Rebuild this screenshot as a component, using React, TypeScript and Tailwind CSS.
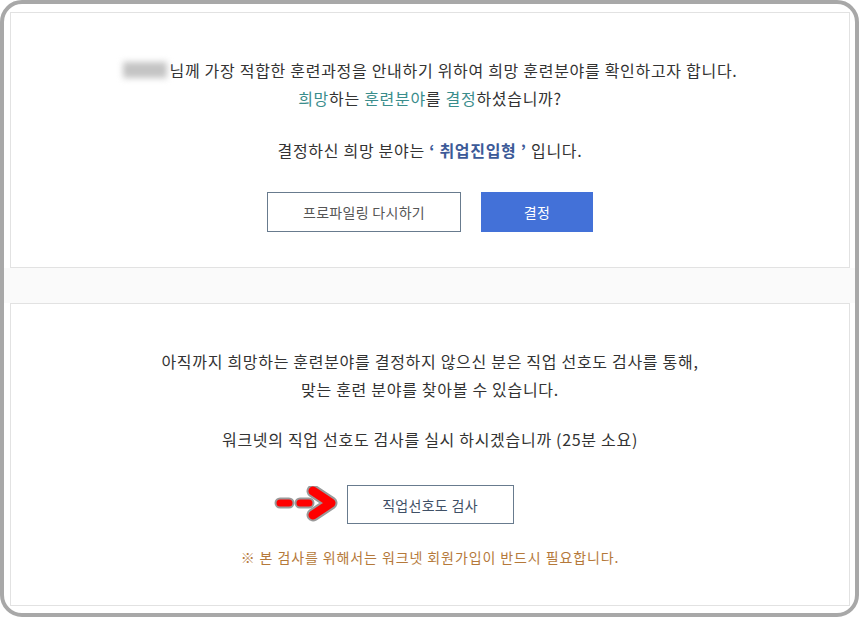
const font = { fontFamily: '"Noto Sans CJK KR", "Noto Sans", sans-serif' }

const Arrow = () => (
  <svg className="absolute left-[-75px] top-[1px]" width="68" height="36" viewBox="0 0 68 36">
    <g stroke="#9a9a9a" strokeLinecap="round" strokeLinejoin="round" fill="none">
      <line x1="8" y1="17" x2="17" y2="17" strokeWidth="11" />
      <line x1="28" y1="17" x2="37" y2="17" strokeWidth="11" />
      <polyline points="41,5 59,17 41,29" strokeWidth="13" />
    </g>
    <g stroke="#ff0000" strokeLinecap="round" strokeLinejoin="round" fill="none">
      <line x1="8" y1="17" x2="17" y2="17" strokeWidth="7" />
      <line x1="28" y1="17" x2="37" y2="17" strokeWidth="7" />
      <polyline points="41,5 59,17 41,29" strokeWidth="9" />
    </g>
  </svg>
)

export default function App() {
  return (
    <div
      className="w-[859px] h-[617px] border-4 border-[#a8a8a8] rounded-[22px] bg-white overflow-hidden flex flex-col pt-2 pl-[6px] pr-[5px] text-[#333]"
      style={font}
    >
      <div className="h-[256px] border border-[#e2e2e2] bg-white flex flex-col items-center pt-[43px] text-[16px] tracking-[0.7px] leading-[28px] shrink-0">
        <p className="flex items-center">
          <span className="inline-block w-[44px] h-[16px] mr-[3px] bg-[#c4c4c4] blur-[3px]" />
          님께 가장 적합한 훈련과정을 안내하기 위하여 희망 훈련분야를 확인하고자 합니다.
        </p>
        <p>
          <span className="text-[#3a8d8c]">희망</span>하는 <span className="text-[#3a8d8c]">훈련분야</span>를{' '}
          <span className="text-[#3a8d8c]">결정</span>하셨습니까?
        </p>
        <p className="mt-6">
          결정하신 희망 분야는 <b className="text-[#3c5a98]">‘ 취업진입형 ’</b> 입니다.
        </p>
        <div className="flex gap-5 mt-7 tracking-[0.3px]">
          <button className="w-[194px] h-[40px] border border-[#687b8e] bg-white text-[14px] text-[#555]">
            프로파일링 다시하기
          </button>
          <button className="w-[112px] h-[40px] bg-[#4371d8] text-[14px] text-white">결정</button>
        </div>
      </div>

      <div className="h-[35px] bg-[#fafafa] -ml-[6px] -mr-[5px] shrink-0" />

      <div className="h-[303px] border border-[#e2e2e2] bg-white flex flex-col items-center pt-[43px] text-[16px] tracking-[0.7px] leading-[28px] shrink-0">
        <p>아직까지 희망하는 훈련분야를 결정하지 않으신 분은 직업 선호도 검사를 통해,</p>
        <p>맞는 훈련 분야를 찾아볼 수 있습니다.</p>
        <p className="mt-[22px]">워크넷의 직업 선호도 검사를 실시 하시겠습니까 (25분 소요)</p>
        <div className="relative mt-8 tracking-[0.3px]">
          <Arrow />
          <button className="w-[167px] h-[39px] border border-[#687b8e] bg-white text-[14px] text-[#3f5066]">
            직업선호도 검사
          </button>
        </div>
        <p className="mt-[21px] text-[14px] tracking-[0.9px] leading-[24px] text-[#b5793a]">
          ※ 본 검사를 위해서는 워크넷 회원가입이 반드시 필요합니다.
        </p>
      </div>
    </div>
  )
}
